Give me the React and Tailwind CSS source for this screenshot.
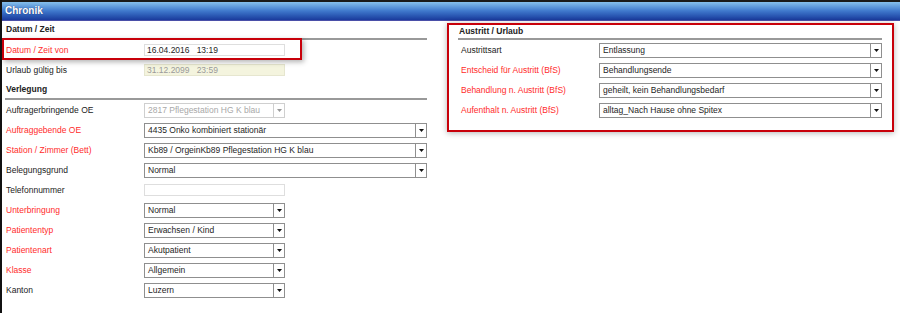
import React from "react";

// --- Helper Components ---

const Arrow = ({ disabled }) => (
  <svg width="5" height="3" viewBox="0 0 5 3">
    <path d="M0 0 H5 L2.5 3 Z" fill={disabled ? "#999" : "#111"} />
  </svg>
);

const Select = ({ value, wide, disabled }) => (
  <div
    className={`flex h-[15px] items-stretch border bg-white ${wide ? "w-[283px]" : "w-[141px]"} ${
      disabled ? "border-[#cfcfcf] text-[#a8a8a8]" : "border-[#8f8f8f] text-[#1e1e1e]"
    }`}
  >
    <div className="flex-1 flex items-center pl-[3px] truncate">{value}</div>
    <div
      className={`w-[11px] flex items-center justify-center border-l ${
        disabled ? "border-[#cfcfcf]" : "border-[#8f8f8f]"
      }`}
    >
      <Arrow disabled={disabled} />
    </div>
  </div>
);

const TextBox = ({ value, disabled }) => (
  <div
    className={`flex items-center h-[12px] w-[141px] border pl-[2px] whitespace-pre ${
      disabled
        ? "bg-[#f4f4de] border-[#e6e6cf] text-[#9a9a9a]"
        : "bg-white border-[#dedede] text-[#1e1e1e]"
    }`}
  >
    {value}
  </div>
);

const Heading = ({ children, className = "" }) => (
  <div
    className={`flex items-center font-bold text-[#222] border-b-2 border-[#999] pl-[1px] ${className}`}
  >
    {children}
  </div>
);

const Row = ({ label, red, children }) => (
  <div className="flex items-center h-[20px]">
    <div className={`w-[138px] ${red ? "text-[#ff2b2b]" : "text-[#222]"}`}>{label}</div>
    {children}
  </div>
);

const Highlight = ({ className }) => (
  <div
    className={`absolute pointer-events-none border-2 border-[#c8000a] shadow-[2px_2px_5px_rgba(0,0,0,0.3)] ${className}`}
  ></div>
);

// --- Main Component ---

const App = () => {
  return (
    <div
      className="w-[900px] h-[313px] bg-white border-l-2 border-[#111] overflow-hidden text-[8.5px] leading-none"
      style={{ fontFamily: '"Liberation Sans", Arial, sans-serif' }}
    >
      {/* Title bar */}
      <div className="h-[21px] border-t-2 border-[#1a1a1a] border-b border-b-[#4a4fa8] bg-gradient-to-b from-[#86c0ec] via-[#3f78cc] to-[#1b3a9c] flex items-center pl-[3px]">
        <span className="text-white font-bold text-[10px] [text-shadow:0_0_1px_rgba(0,0,40,0.6)]">
          Chronik
        </span>
      </div>

      <div className="flex">
        {/* Left column */}
        <div className="w-[445px]">
          <Heading className="ml-[3px] w-[422px] h-[19px]">Datum / Zeit</Heading>

          <div className="relative pl-[4px]">
            <Highlight className="-top-[2px] left-0 w-[300px] h-[22px]" />
            <Row label="Datum / Zeit von" red>
              <TextBox value="16.04.2016   13:19" />
            </Row>
          </div>
          <div className="pl-[4px]">
            <Row label="Urlaub gültig bis">
              <TextBox value="31.12.2099   23:59" disabled />
            </Row>
          </div>

          <Heading className="ml-[3px] w-[422px] h-[20px]">Verlegung</Heading>

          <div className="pl-[4px]">
            <Row label="Auftragerbringende OE">
              <Select value="2817 Pflegestation HG K blau" disabled />
            </Row>
            <Row label="Auftraggebende OE" red>
              <Select value="4435 Onko kombiniert stationär" wide />
            </Row>
            <Row label="Station / Zimmer (Bett)" red>
              <Select value="Kb89 / OrgeinKb89 Pflegestation HG K blau" wide />
            </Row>
            <Row label="Belegungsgrund">
              <Select value="Normal" wide />
            </Row>
            <Row label="Telefonnummer">
              <TextBox value="" />
            </Row>
            <Row label="Unterbringung" red>
              <Select value="Normal" />
            </Row>
            <Row label="Patiententyp" red>
              <Select value="Erwachsen / Kind" />
            </Row>
            <Row label="Patientenart" red>
              <Select value="Akutpatient" />
            </Row>
            <Row label="Klasse" red>
              <Select value="Allgemein" />
            </Row>
            <Row label="Kanton">
              <Select value="Luzern" />
            </Row>
          </div>
        </div>

        {/* Right panel */}
        <div className="w-[447px] mt-[2px] self-start border-2 border-[#c8000a] shadow-[0_1px_6px_rgba(0,0,0,0.3)] pl-[9px] pr-[10px] pb-[10px]">
          <Heading className="h-[15px]">Austritt / Urlaub</Heading>
          <div className="pl-[3px]">
            <Row label="Austrittsart">
              <Select value="Entlassung" wide />
            </Row>
            <Row label="Entscheid für Austritt (BfS)" red>
              <Select value="Behandlungsende" wide />
            </Row>
            <Row label="Behandlung n. Austritt (BfS)" red>
              <Select value="geheilt, kein Behandlungsbedarf" wide />
            </Row>
            <Row label="Aufenthalt n. Austritt (BfS)" red>
              <Select value="alltag_Nach Hause ohne Spitex" wide />
            </Row>
          </div>
        </div>
      </div>
    </div>
  );
};

export default App;
